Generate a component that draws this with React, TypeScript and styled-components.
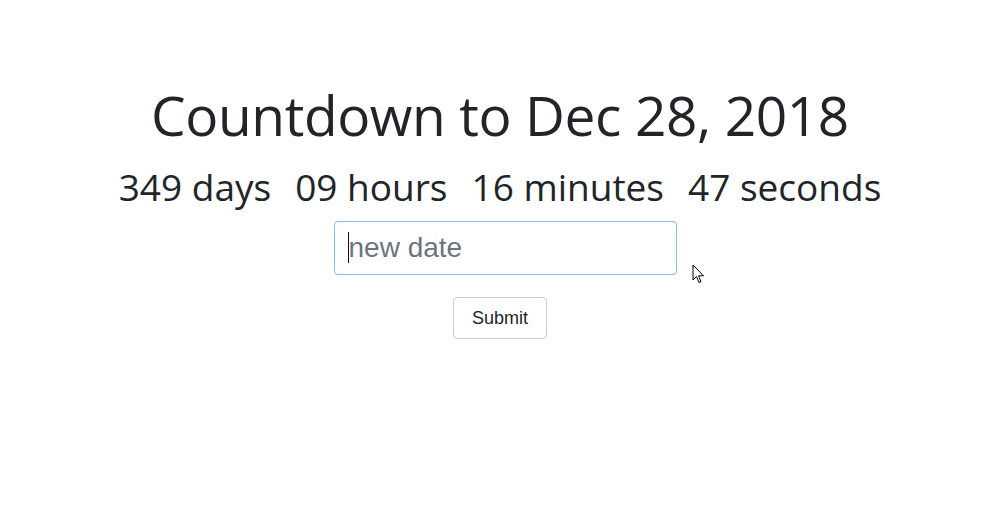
import React from 'react'
import styled, { createGlobalStyle } from 'styled-components'

const GlobalStyle = createGlobalStyle`
  body {
    margin: 0;
    background: #fff;
    color: #212529;
    font-family: "Open Sans", "Liberation Sans", sans-serif;
  }
`

const Page = styled.div`
  position: relative;
  width: 996px;
  height: 526px;
  display: flex;
  flex-direction: column;
  align-items: center;
  padding-top: 75px;
  box-sizing: border-box;
`

const Title = styled.h1`
  margin: 0;
  font-size: 55px;
  font-weight: 400;
  line-height: 80px;
  letter-spacing: -0.4px;
  margin-left: 4px;
`

const Counter = styled.div`
  display: flex;
  gap: 24px;
  font-size: 37px;
  line-height: 52px;
  margin-top: 6px;
  margin-left: 4px;
`

const Form = styled.form`
  display: flex;
  flex-direction: column;
  align-items: center;
  gap: 22px;
  margin-top: 8px;
`

const InputWrap = styled.div`
  position: relative;
  margin-left: 14px;
`

const DateInput = styled.input`
  display: block;
  width: 343px;
  height: 54px;
  box-sizing: border-box;
  padding: 0 14px;
  border: 1px solid #80bdff;
  border-radius: 4px;
  font-family: "Liberation Sans", Arial, sans-serif;
  font-size: 28px;
  color: #495057;
  caret-color: transparent;
  outline: none;
  &::placeholder {
    color: #6c757d;
  }
`

// blinking text caret, frozen on
const Caret = styled.span`
  position: absolute;
  left: 14px;
  top: 11px;
  width: 1px;
  height: 31px;
  background: #111;
  pointer-events: none;
`

const SubmitButton = styled.button`
  width: 94px;
  height: 42px;
  background: #fff;
  border: 1px solid #ccc;
  border-radius: 4px;
  font-family: "Liberation Sans", Arial, sans-serif;
  font-size: 18px;
  color: #212529;
  margin-left: 4px;
`

const Pointer = styled.svg`
  position: absolute;
  left: 692px;
  top: 264px;
`

export default function App () {
  return (
    <>
      <GlobalStyle />
      <Page>
        <Title>Countdown to Dec 28, 2018</Title>
        <Counter>
          <span>349 days</span>
          <span>09 hours</span>
          <span>16 minutes</span>
          <span>47 seconds</span>
        </Counter>
        <Form onSubmit={e => e.preventDefault()}>
          <InputWrap>
            <DateInput placeholder='new date' autoFocus />
            <Caret />
          </InputWrap>
          <SubmitButton type='submit'>Submit</SubmitButton>
        </Form>
        <Pointer width='14' height='22' viewBox='0 0 14 22'>
          <path d='M1 1 L1 16 L4.5 12.5 L7 18.5 L9 17.7 L6.6 11.8 L11.5 11.8 Z' fill='#fff' stroke='#000' strokeWidth='1' />
        </Pointer>
      </Page>
    </>
  )
}
